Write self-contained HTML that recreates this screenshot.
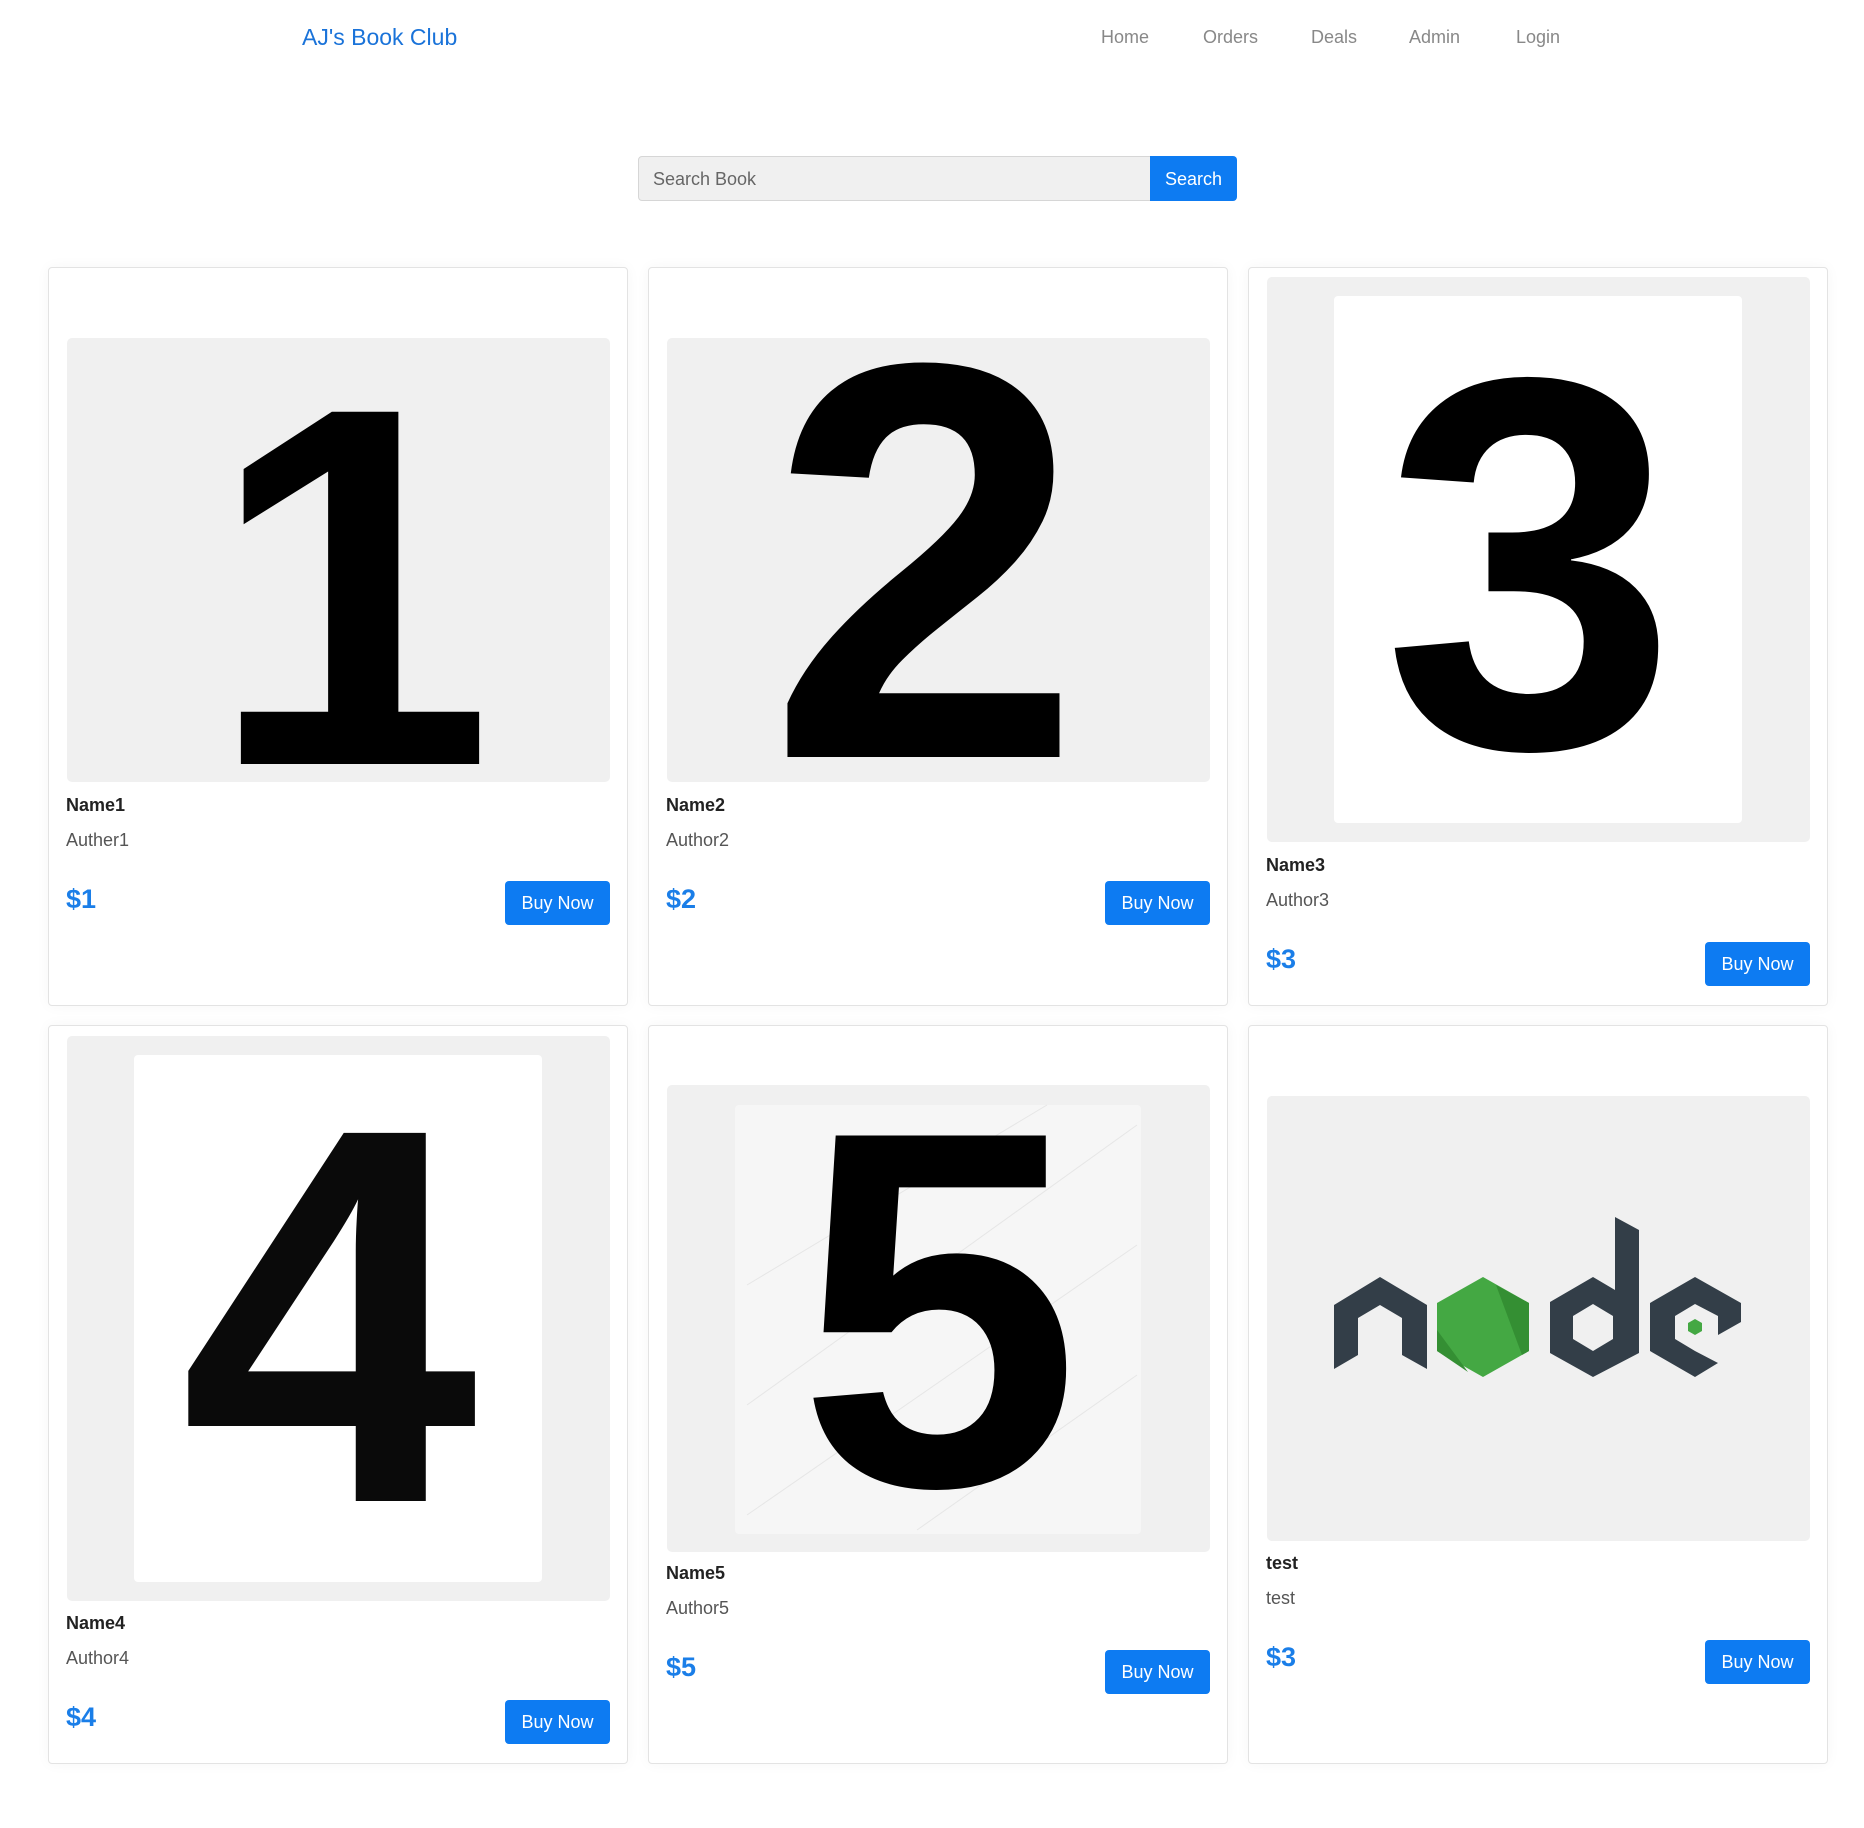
<!DOCTYPE html>
<html><head><meta charset="utf-8"><style>
*{margin:0;padding:0;box-sizing:border-box}
body{width:1864px;height:1828px;background:#fff;position:relative;font-family:"Liberation Sans",sans-serif;overflow:hidden}
.a{position:absolute}
.logo{left:302px;top:24px;font-size:23px;color:#1a73d9}
.nav{top:27px;font-size:18px;color:#888}
.inp{left:638px;top:156px;width:513px;height:45px;background:#f0f0f0;border:1px solid #d6d6d6;border-radius:4px 0 0 4px;font-size:18px;color:#666;padding:12px 14px}
.sbtn{left:1150px;top:156px;width:87px;height:45px;background:#0d7bf2;border-radius:0 4px 4px 0;color:#fff;font-size:18px;text-align:center;line-height:46px}
.card{border:1px solid #e3e3e3;border-radius:4px;box-shadow:0 0 14px rgba(0,0,0,.04);width:580px;background:#fff}
.img{background:#f0f0f0;border-radius:5px;width:543px;overflow:hidden}
.nm{font-size:18px;font-weight:bold;color:#222}
.au{font-size:18px;color:#555}
.pr{font-size:27px;font-weight:bold;color:#1a7ee8}
.bb{width:105px;height:44px;background:#0d7bf2;border-radius:4px;color:#fff;font-size:18px;text-align:center;line-height:45px}
</style></head><body>
<div class="a logo">AJ's Book Club</div>
<div class="a nav" style="left:1101px">Home</div>
<div class="a nav" style="left:1203px">Orders</div>
<div class="a nav" style="left:1311px">Deals</div>
<div class="a nav" style="left:1409px">Admin</div>
<div class="a nav" style="left:1516px">Login</div>
<div class="a inp">Search Book</div>
<div class="a sbtn">Search</div>

<div class="a card" style="left:48px;top:267px;height:739px"></div>
<div class="a card" style="left:648px;top:267px;height:739px"></div>
<div class="a card" style="left:1248px;top:267px;height:739px"></div>
<div class="a card" style="left:48px;top:1025px;height:739px"></div>
<div class="a card" style="left:648px;top:1025px;height:739px"></div>
<div class="a card" style="left:1248px;top:1025px;height:739px"></div>

<div class="a img" style="left:67px;top:338px;height:444px"><svg width="543" height="444"><text x="284" y="426" font-family="Liberation Sans" font-weight="bold" font-size="512" text-anchor="middle">1</text></svg></div>
<div class="a nm" style="left:66px;top:795px">Name1</div>
<div class="a au" style="left:66px;top:830px">Auther1</div>
<div class="a pr" style="left:66px;top:884px">$1</div>
<div class="a bb" style="left:505px;top:881px">Buy Now</div>

<div class="a img" style="left:667px;top:338px;height:444px"><svg width="543" height="444"><text x="258" y="419" font-family="Liberation Sans" font-weight="bold" font-size="565" text-anchor="middle">2</text></svg></div>
<div class="a nm" style="left:666px;top:795px">Name2</div>
<div class="a au" style="left:666px;top:830px">Author2</div>
<div class="a pr" style="left:666px;top:884px">$2</div>
<div class="a bb" style="left:1105px;top:881px">Buy Now</div>

<div class="a img" style="left:1267px;top:277px;height:565px"><svg width="543" height="565"><rect x="67" y="19" width="408" height="527" rx="4" fill="#fff"/><text x="263" y="470" font-family="Liberation Sans" font-weight="bold" font-size="530" text-anchor="middle">3</text></svg></div>
<div class="a nm" style="left:1266px;top:855px">Name3</div>
<div class="a au" style="left:1266px;top:890px">Author3</div>
<div class="a pr" style="left:1266px;top:944px">$3</div>
<div class="a bb" style="left:1705px;top:942px">Buy Now</div>

<div class="a img" style="left:67px;top:1036px;height:565px"><svg width="543" height="565"><rect x="67" y="19" width="408" height="527" rx="4" fill="#fff"/><text x="262" y="465" font-family="Liberation Sans" font-weight="bold" font-size="535" text-anchor="middle" fill="#0a0a0a">4</text></svg></div>
<div class="a nm" style="left:66px;top:1613px">Name4</div>
<div class="a au" style="left:66px;top:1648px">Author4</div>
<div class="a pr" style="left:66px;top:1702px">$4</div>
<div class="a bb" style="left:505px;top:1700px">Buy Now</div>

<div class="a img" style="left:667px;top:1085px;height:467px"><svg width="543" height="467"><rect x="68" y="20" width="406" height="429" rx="4" fill="#f6f6f6"/><g stroke="#e6e6e6" stroke-width="1"><line x1="80" y1="200" x2="380" y2="20"/><line x1="80" y1="320" x2="470" y2="40"/><line x1="80" y1="430" x2="470" y2="160"/><line x1="250" y1="445" x2="470" y2="290"/></g><text x="272" y="400" font-family="Liberation Sans" font-weight="bold" font-size="508" text-anchor="middle">5</text></svg></div>
<div class="a nm" style="left:666px;top:1563px">Name5</div>
<div class="a au" style="left:666px;top:1598px">Author5</div>
<div class="a pr" style="left:666px;top:1652px">$5</div>
<div class="a bb" style="left:1105px;top:1650px">Buy Now</div>

<div class="a img" style="left:1267px;top:1096px;height:445px"><svg width="543" height="445"><g transform="translate(-1267,-1096)">
<polygon fill="#333e48" points="1334,1305 1380,1277 1427,1305 1427,1369 1402,1355 1402,1318 1380,1305 1358,1318 1358,1355 1334,1369"/>
<polygon fill="#44a843" points="1483,1277 1529,1303 1529,1351 1483,1377 1437,1351 1437,1303"/>
<polygon fill="#348f33" points="1496,1285 1529,1303 1529,1351 1522,1355"/>
<polygon fill="#348f33" points="1437,1330 1468,1372 1437,1351"/>
<path fill="#333e48" fill-rule="evenodd" d="M1593,1277 L1615,1290 L1615,1217 L1639,1230 L1639,1353 L1593,1377 L1550,1353 L1550,1302 Z M1593,1304 L1573,1316 L1573,1339 L1593,1351 L1613,1339 L1613,1316 Z"/>
<path fill="#333e48" fill-rule="evenodd" d="M1695,1277 L1741,1303 L1741,1322 L1718,1335 L1718,1316 L1695,1304 L1675,1316 L1675,1339 L1695,1351 L1718,1363 L1695,1377 L1650,1351 L1650,1303 Z"/>
<polygon fill="#44a843" points="1695,1319 1702,1323 1702,1331 1695,1335 1688,1331 1688,1323"/>
</g></svg></div>
<div class="a nm" style="left:1266px;top:1553px">test</div>
<div class="a au" style="left:1266px;top:1588px">test</div>
<div class="a pr" style="left:1266px;top:1642px">$3</div>
<div class="a bb" style="left:1705px;top:1640px">Buy Now</div>
</body></html>
